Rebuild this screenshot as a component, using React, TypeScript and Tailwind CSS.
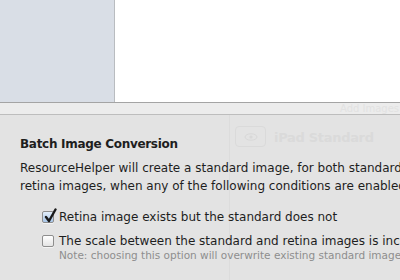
import React from "react";

const font = { fontFamily: '"DejaVu Sans", "Lucida Grande", sans-serif' };

function Check({ checked }: { checked?: boolean }) {
  return (
    <div
      className={
        "relative w-[12px] h-[12px] shrink-0 rounded-[2px] border border-[#8e8e8e] bg-gradient-to-b shadow-[0_1px_0_rgba(255,255,255,0.6)] " +
        (checked ? "from-[#e3eefa] to-[#a8c6e8] border-[#7a8ea8]" : "from-[#ffffff] to-[#e4e4e4]")
      }
    >
      {checked && (
        <svg className="absolute left-[1px] top-[-4px]" width="13" height="15" viewBox="0 0 13 15">
          <path d="M2 9 L5 13 L11.5 1.5" fill="none" stroke="#1a1a1a" strokeWidth="2.4" strokeLinecap="round" strokeLinejoin="round" />
        </svg>
      )}
    </div>
  );
}

export default function App() {
  return (
    <div className="relative w-[400px] h-[280px] overflow-hidden bg-[#e3e3e3]" style={font}>
      <div className="flex h-[102px]">
        <div className="w-[115px] bg-[#d9dee6] border-r border-[#b9bcc0]" />
        <div className="flex-1 bg-white" />
      </div>
      <div className="h-[1px] bg-[#a4a4a4]" />
      <div className="relative h-[12px] bg-[#ececec] border-b border-[#bdbdbd] overflow-hidden">
        <span className="absolute left-[340px] top-[0px] text-[10px] leading-[11px] text-[#e2e2e2] whitespace-nowrap">Add Images</span>
      </div>
      <div className="relative h-[165px] bg-[#e3e3e3] pl-[20px] pt-[21px]">
        <div className="absolute left-[229px] top-0 bottom-0 w-px bg-[#dcdcdc]" />
        <div className="absolute left-[235px] top-[11px] w-[31px] h-[21px] rounded-[4px] border border-[#dadada] flex items-center justify-center">
          <svg width="14" height="8" viewBox="0 0 14 8">
            <ellipse cx="7" cy="4" rx="6" ry="3.2" fill="none" stroke="#d8d8d8" strokeWidth="1" />
            <circle cx="7" cy="4" r="1.6" fill="#d8d8d8" />
          </svg>
        </div>
        <span className="absolute left-[274px] top-[15px] text-[13px] leading-[16px] font-bold text-[#dadada] whitespace-nowrap tracking-[-0.3px]">iPad Standard</span>
        <div className="relative text-[12px] font-bold text-[#1e1e1e] leading-[16px] whitespace-nowrap tracking-[-0.3px]">Batch Image Conversion</div>
        <div className="relative mt-[7px] text-[12px] text-[#1e1e1e] leading-[18px] whitespace-nowrap">
          <div>ResourceHelper will create a standard image, for both standard</div>
          <div>retina images, when any of the following conditions are enabled:</div>
        </div>
        <div className="relative mt-[13px] pl-[22px] flex flex-col">
          <div className="flex items-center gap-[5px] h-[18px] text-[12px] text-[#1e1e1e] whitespace-nowrap">
            <Check checked />
            <span>Retina image exists but the standard does not</span>
          </div>
          <div className="flex items-center gap-[5px] h-[18px] mt-[6px] text-[12px] text-[#1e1e1e] whitespace-nowrap">
            <Check />
            <span>The scale between the standard and retina images is incorrect</span>
          </div>
          <div className="pl-[17px] -mt-[1px] text-[10.5px] leading-[13px] text-[#8e8e8e] whitespace-nowrap">
            Note: choosing this option will overwrite existing standard images
          </div>
        </div>
      </div>
    </div>
  );
}
